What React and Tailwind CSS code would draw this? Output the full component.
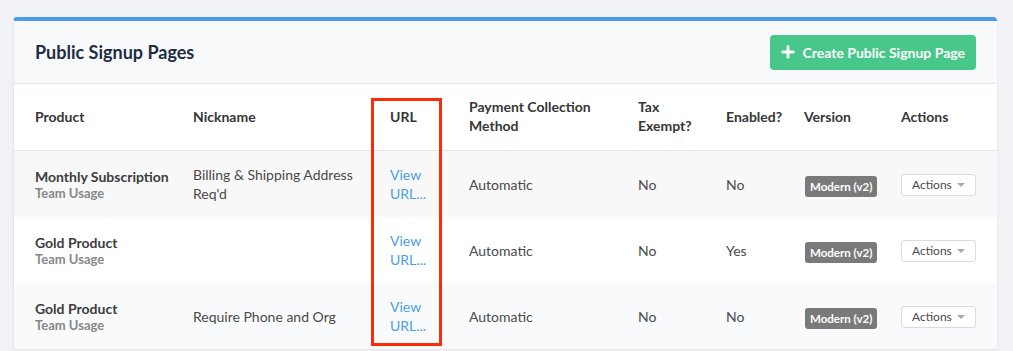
import React from 'react';
import { Plus } from 'lucide-react';

const rows = [
  { product: 'Monthly Subscription', nickname: 'Billing & Shipping Address Req\'d', enabled: 'No', bg: 'bg-[#f8f8f8]' },
  { product: 'Gold Product', nickname: '', enabled: 'Yes', bg: 'bg-white' },
  { product: 'Gold Product', nickname: 'Require Phone and Org', enabled: 'No', bg: 'bg-[#f9fafc]' },
];

const cols = 'grid grid-cols-[179px_197px_79px_169px_88px_78px_97px_96px]';

const App = () => {
  return (
    <div className="min-h-screen bg-[#f1f2f5] pt-[17px] pl-[13px] pr-[16px] font-['Lato','Noto_Sans',sans-serif]">
      <div className="relative bg-white border-t-4 border-[#4a9be8] rounded-t-[4px] border-l border-l-[#e3e5e8] shadow-[0_1px_2px_rgba(0,0,0,0.06)]">
        <div className="flex items-center justify-between h-[63px] bg-[#f8f9fa] border-b border-[#e4e6e9] pl-[21px] pr-[21px]">
          <h1 className="text-[18px] font-bold text-[#1f2d44] mt-[1px]">Public Signup Pages</h1>
          <button className="flex items-center gap-[6px] h-[35px] pl-[9px] pr-[11px] rounded-[4px] bg-[#48c78a] text-white text-[14px] font-bold">
            <Plus size={18} strokeWidth={3.8} />
            Create Public Signup Page
          </button>
        </div>

        <div className={`${cols} h-[67px] pb-[2px] items-center border-b border-[#e4e6e9] text-[14px] font-bold text-[#363636] leading-[19px]`}>
          <div className="pl-[21px]">Product</div>
          <div>Nickname</div>
          <div>URL</div>
          <div>Payment Collection<br />Method</div>
          <div>Tax<br />Exempt?</div>
          <div>Enabled?</div>
          <div>Version</div>
          <div>Actions</div>
        </div>

        {rows.map((r, i) => (
          <div key={i} className={`${cols} h-[66px] items-center text-[14px] text-[#4a4a4a] ${r.bg}`}>
            <div className="pl-[21px]">
              <div className="font-bold leading-[17px] text-[#3d3d3d]">{r.product}</div>
              <div className="text-[13px] font-bold leading-[16px] text-[#888]">Team Usage</div>
            </div>
            <div className="leading-[19px] pr-4">{r.nickname}</div>
            <div className="leading-[19px] text-[#4a9ee6]">View<br />URL...</div>
            <div>Automatic</div>
            <div>No</div>
            <div>{r.enabled}</div>
            <div>
              <span className="inline-block bg-[#7a7a7a] text-white text-[11.5px] font-bold rounded-[3px] px-[5px] leading-[21px] ml-[1px] mt-[5px]">Modern (v2)</span>
            </div>
            <div>
              <span className="inline-flex items-center gap-[5px] h-[22px] px-[10px] border border-[#dcdcdc] rounded-[3px] bg-white text-[12px] text-[#4a4a4a]">
                Actions
                <span className="w-0 h-0 border-l-[4px] border-r-[4px] border-t-[4px] border-l-transparent border-r-transparent border-t-[#aaa]" />
              </span>
            </div>
          </div>
        ))}

        <div className="absolute left-[357px] top-[77px] w-[71px] h-[248px] border-[3px] border-[#ff2a0a] pointer-events-none" />
      </div>
    </div>
  );
};

export default App;
